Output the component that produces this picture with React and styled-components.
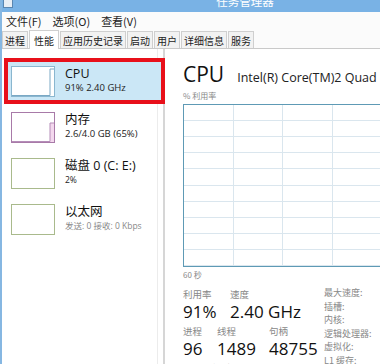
import React from 'react';
import styled, { createGlobalStyle } from 'styled-components';

const GlobalStyle = createGlobalStyle`
  html, body {
    margin: 0;
    padding: 0;
    background: #ffffff;
  }
  body {
    font-family: "Open Sans", "Noto Sans CJK SC", sans-serif;
  }
`;

const Window = styled.div`
  width: 380px;
  height: 364px;
  overflow: hidden;
  display: flex;
  flex-direction: column;
  border-left: 2px solid #86b7e2;
  box-sizing: border-box;
  background: #ffffff;
  color: #1a1a1a;
`;

const TitleBar = styled.div`
  height: 12px;
  flex-shrink: 0;
  background: #79b2e5;
  display: flex;
  justify-content: center;
  overflow: hidden;
  position: relative;
`;

const AppIcon = styled.div`
  position: absolute;
  left: 1px;
  top: 0;
  width: 10px;
  height: 8px;
  background: #e8eef5;
  border: 1px solid #5a86b0;
  border-top: none;
  box-sizing: border-box;
`;

const Title = styled.span`
  font-family: "Noto Sans CJK SC", sans-serif;
  font-size: 11.5px;
  line-height: 12px;
  color: #ffffff;
  margin-top: -5px;
  margin-left: 108px;
`;

const MenuBar = styled.div`
  height: 18px;
  flex-shrink: 0;
  display: flex;
  align-items: center;
  gap: 11px;
  padding-left: 4px;
  background: #fbfbfb;
  font-family: "Noto Sans CJK SC", sans-serif;
  font-size: 11px;
`;

const MenuItem = styled.span`
  color: #222;
`;

const TabBar = styled.div`
  height: 18px;
  flex-shrink: 0;
  display: flex;
  align-items: flex-end;
  gap: 1px;
  border-bottom: 1px solid #c9c9c9;
  background: #fbfbfb;
  font-family: "Noto Sans CJK SC", sans-serif;
  font-size: 10px;
`;

const Tab = styled.div`
  height: ${p => (p.$active ? 19 : 17)}px;
  padding: 0 ${p => (p.$active ? 4 : 2)}px;
  display: flex;
  align-items: center;
  box-sizing: border-box;
  border: 1px solid #cfcfcf;
  border-bottom: none;
  background: ${p => (p.$active ? '#ffffff' : '#f2f2f2')};
  margin-bottom: ${p => (p.$active ? -1 : 0)}px;
  color: #222;
`;

const Body = styled.div`
  flex: 1;
  display: flex;
  min-height: 0;
`;

const Sidebar = styled.div`
  width: 155px;
  flex-shrink: 0;
  padding-top: 9px;
  border-right: 1px solid #ececec;
  display: flex;
  flex-direction: column;
`;

const ScrollGap = styled.div`
  width: 5px;
  flex-shrink: 0;
  border-right: 2px solid #d6d6d6;
`;

const Item = styled.div`
  height: 46px;
  display: flex;
  gap: 10px;
  padding: 8px 0 0 9px;
  box-sizing: border-box;
  position: relative;
`;

const Highlight = styled.div`
  position: absolute;
  left: 2px;
  right: -8px;
  top: 0;
  bottom: 0;
  border: 4px solid #e8101a;
  background: #cbe7f6;
`;

const Thumb = styled.div`
  width: 44px;
  height: 31px;
  box-sizing: border-box;
  border: 1px solid ${p => p.$color};
  background: #ffffff;
  flex-shrink: 0;
  position: relative;
  display: flex;
  align-items: flex-end;
  justify-content: flex-end;
`;

const ItemText = styled.div`
  display: flex;
  flex-direction: column;
  position: relative;
`;

const ItemName = styled.span`
  font-family: "Open Sans", "Noto Sans CJK SC", sans-serif;
  font-size: 12.5px;
  line-height: 15px;
  color: #111;
`;

const ItemSub = styled.span`
  font-family: "Open Sans", "Noto Sans CJK SC", sans-serif;
  font-size: ${p => (p.$small ? 8.5 : 9.5)}px;
  line-height: 13px;
  color: ${p => (p.$muted ? '#888' : '#222')};
  white-space: nowrap;
`;

const Main = styled.div`
  flex: 1;
  min-width: 0;
  padding: 12px 0 0 18px;
  display: flex;
  flex-direction: column;
  overflow: hidden;
`;

const Header = styled.div`
  display: flex;
  align-items: baseline;
  gap: 13px;
  white-space: nowrap;
`;

const BigTitle = styled.span`
  font-size: 21px;
  line-height: 26px;
  color: #111;
`;

const Model = styled.span`
  font-size: 12.5px;
  color: #222;
`;

const Caption = styled.div`
  font-family: "Noto Sans CJK SC", sans-serif;
  font-size: 8px;
  line-height: 11px;
  color: #888;
  margin-top: ${p => p.$top || 0}px;
`;

const Graph = styled.div`
  width: 230px;
  height: 163px;
  flex-shrink: 0;
  box-sizing: border-box;
  border: 1px solid #5e9ab5;
  margin-top: 3px;
  display: grid;
  grid-template-columns: repeat(5, 49.5px);
  grid-template-rows: repeat(10, 1fr);
`;

const Cell = styled.div`
  border-right: 1px solid #dae6ee;
  border-bottom: 1px solid #dae6ee;
`;

const Stats = styled.div`
  display: flex;
  margin-top: 7px;
`;

const StatsLeft = styled.div`
  width: 141px;
  flex-shrink: 0;
  display: flex;
  flex-direction: column;
`;

const StatRow = styled.div`
  display: flex;
  margin-bottom: 2px;
`;

const Stat = styled.div`
  width: ${p => (p.$w ? `${p.$w}px` : 'auto')};
  display: flex;
  flex-direction: column;
  white-space: nowrap;
`;

const StatLabel = styled.span`
  font-family: "Noto Sans CJK SC", sans-serif;
  font-size: 9.5px;
  line-height: 14px;
  color: #888;
`;

const StatValue = styled.span`
  font-size: 17px;
  line-height: 21px;
  color: #111;
`;

const StatsRight = styled.div`
  display: flex;
  flex-direction: column;
  margin-top: -1px;
`;

const InfoLabel = styled.span`
  font-family: "Noto Sans CJK SC", sans-serif;
  font-size: 9px;
  line-height: 13.6px;
  color: #888;
  white-space: nowrap;
`;

function MiniChart({ color, fill, level }) {
  return (
    <svg width="42" height="29" viewBox="0 0 42 29" style={{ display: 'block' }}>
      {fill && <rect x={38} y={29 - level} width={4} height={level} fill={fill} />}
      <polyline points={`0,28.5 38,28.5 38,${29 - level} 42,${29 - level}`} fill="none" stroke={color} strokeWidth="1" />
    </svg>
  );
}

const items = [
  { name: 'CPU', sub: '91% 2.40 GHz', color: '#8ab6cf', line: '#7aa8c4', level: 27, selected: true },
  { name: '内存', sub: '2.6/4.0 GB (65%)', color: '#a87aa8', line: '#b58db8', fill: '#f4d8ee', level: 19 },
  { name: '磁盘 0 (C: E:)', sub: '2%', color: '#a9ba8c', small: true },
  { name: '以太网', sub: '发送: 0 接收: 0 Kbps', color: '#a9ba8c', small: true, muted: true },
];

const tabs = ['进程', '性能', '应用历史记录', '启动', '用户', '详细信息', '服务'];

const info = ['最大速度:', '插槽:', '内核:', '逻辑处理器:', '虚拟化:', 'L1 缓存:'];

export default function App() {
  return (
    <>
      <GlobalStyle />
      <Window>
        <TitleBar>
          <AppIcon />
          <Title>任务管理器</Title>
        </TitleBar>
        <MenuBar>
          <MenuItem>文件(F)</MenuItem>
          <MenuItem>选项(O)</MenuItem>
          <MenuItem>查看(V)</MenuItem>
        </MenuBar>
        <TabBar>
          {tabs.map(t => (
            <Tab key={t} $active={t === '性能'}>{t}</Tab>
          ))}
        </TabBar>
        <Body>
          <Sidebar>
            {items.map(it => (
              <Item key={it.name}>
                {it.selected && <Highlight />}
                <Thumb $color={it.color}>
                  {it.level && <MiniChart color={it.line} fill={it.fill} level={it.level} />}
                </Thumb>
                <ItemText>
                  <ItemName>{it.name}</ItemName>
                  <ItemSub $small={it.small} $muted={it.muted}>{it.sub}</ItemSub>
                </ItemText>
              </Item>
            ))}
          </Sidebar>
          <ScrollGap />
          <Main>
            <Header>
              <BigTitle>CPU</BigTitle>
              <Model>Intel(R) Core(TM)2 Quad</Model>
            </Header>
            <Caption $top={3}>% 利用率</Caption>
            <Graph>
              {Array.from({ length: 50 }).map((_, i) => (
                <Cell key={i} />
              ))}
            </Graph>
            <Caption $top={2}>60 秒</Caption>
            <Stats>
              <StatsLeft>
                <StatRow>
                  <Stat $w={47}>
                    <StatLabel>利用率</StatLabel>
                    <StatValue>91%</StatValue>
                  </Stat>
                  <Stat>
                    <StatLabel>速度</StatLabel>
                    <StatValue>2.40 GHz</StatValue>
                  </Stat>
                </StatRow>
                <StatRow>
                  <Stat $w={34}>
                    <StatLabel>进程</StatLabel>
                    <StatValue>96</StatValue>
                  </Stat>
                  <Stat $w={52}>
                    <StatLabel>线程</StatLabel>
                    <StatValue>1489</StatValue>
                  </Stat>
                  <Stat>
                    <StatLabel>句柄</StatLabel>
                    <StatValue>48755</StatValue>
                  </Stat>
                </StatRow>
                <StatRow>
                  <Stat>
                    <StatLabel>正常运行时间</StatLabel>
                  </Stat>
                </StatRow>
              </StatsLeft>
              <StatsRight>
                {info.map(l => (
                  <InfoLabel key={l}>{l}</InfoLabel>
                ))}
              </StatsRight>
            </Stats>
          </Main>
        </Body>
      </Window>
    </>
  );
}
